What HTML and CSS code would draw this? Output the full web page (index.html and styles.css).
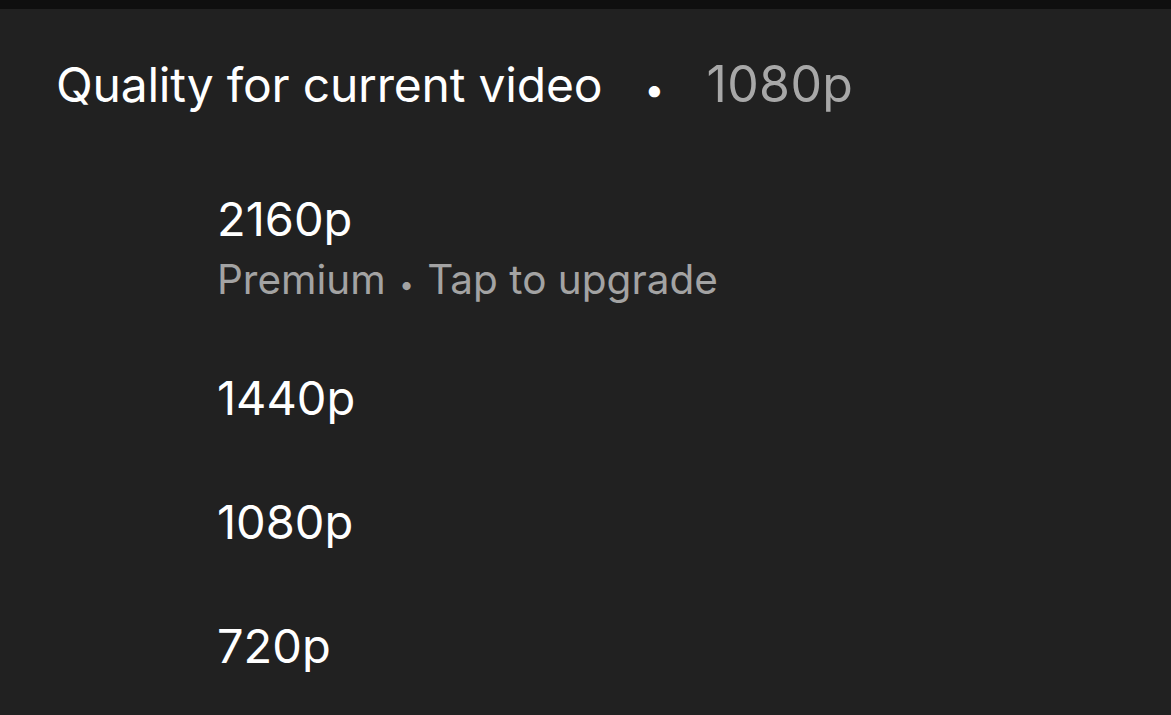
FILE: index.html
```html
<!doctype html>
<html lang="en">

<head>
  <meta charset="UTF-8">
  <meta name="viewport" content="width=device-width, initial-scale=1.0">
  <title>Quality</title>
  <link rel="stylesheet" href="styles.css">
</head>

<body>
  <div class="topbar"></div>
  <div class="sheet">
    <div class="title">
      <span>Quality for current video</span>
      <span class="dot">•</span>
      <span class="current">1080p</span>
    </div>
    <ul class="options">
      <li class="option">
        <div class="label">2160p</div>
        <div class="sub">Premium <span class="sep">•</span> Tap to upgrade</div>
      </li>
      <li class="option">
        <div class="label">1440p</div>
      </li>
      <li class="option">
        <div class="label">1080p</div>
      </li>
      <li class="option">
        <div class="label">720p</div>
      </li>
    </ul>
  </div>
</body>

</html>
```

FILE: styles.css
```css
* {
  margin: 0;
  padding: 0;
  box-sizing: border-box;
}

html,
body {
  height: 100%;
}

body {
  background-color: #212121;
  color: #fff;
  font-family: Inter, "Noto Sans", sans-serif;
  overflow: hidden;
}

.topbar {
  height: 9px;
  background-color: #0f0f0f;
}

.sheet {
  padding: 47px 0 0 56px;
}

.title {
  display: flex;
  align-items: baseline;
  font-size: 48px;
  line-height: 56px;
  letter-spacing: -0.2px;
}

.title .dot {
  margin: 0 42px 0 42px;
  font-size: 36px;
}

.title .current {
  color: #a8a8a8;
  font-size: 50px;
  letter-spacing: 0.4px;
}

/* 选项列表 */
.options {
  list-style: none;
  padding: 74px 0 0 161px;
}

.option {
  padding: 34px 0;
}

.option:first-child {
  padding: 0 0 27px;
}

.label {
  font-size: 47px;
  line-height: 56px;
}

.sub {
  margin-top: 9px;
  font-size: 40.5px;
  line-height: 48px;
  color: #a3a3a3;
}

.sub .sep {
  font-size: 26px;
  margin: 0 2px;
}
```
